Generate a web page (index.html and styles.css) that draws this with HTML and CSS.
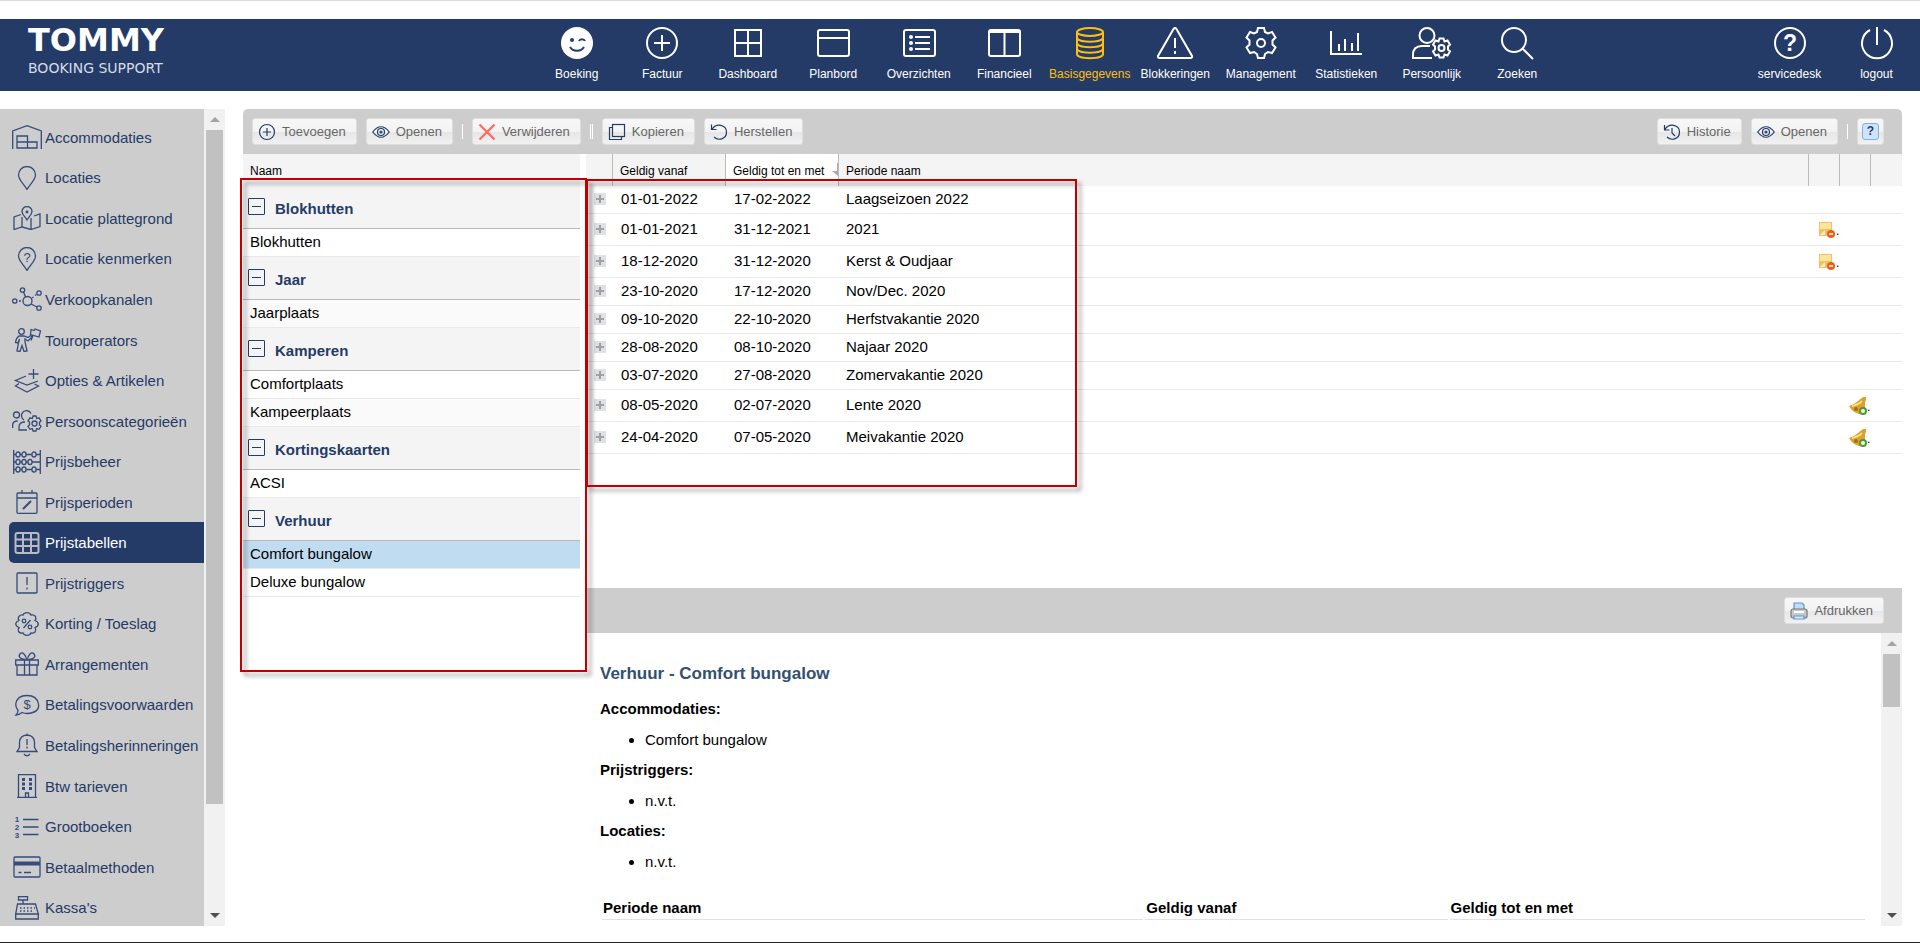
FILE: index.html
```html
<!DOCTYPE html>
<html lang="nl">
<head>
    <meta charset="UTF-8">
    <meta name="viewport" content="width=device-width, initial-scale=1.0">
    <title>Tommy Booking Support - Prijstabellen</title>
    <link rel="stylesheet" href="styles.css">
</head>
<body>
    <header class="topbar">
        <a href="#" class="logo">
            <span class="logo-name">TOMMY</span>
            <span class="logo-sub">BOOKING SUPPORT</span>
        </a>
        <nav class="main-nav">
            <a href="#">
                <svg viewBox="0 0 32 32"><circle cx="16" cy="16" r="16" fill="#fff" stroke="none"/><circle cx="11" cy="13" r="2" fill="#253b67" stroke="none"/><path d="M18 14c1-2.500 5-2.500 6 0M9 20c3 5 11 5 14 0" stroke="#253b67"/></svg>
                <span>Boeking</span>
            </a>
            <a href="#">
                <svg viewBox="0 0 32 32"><circle cx="16" cy="16" r="15"/><path d="M16 8v16M8 16h16"/></svg>
                <span>Factuur</span>
            </a>
            <a href="#">
                <svg viewBox="0 0 32 32"><path d="M3 3h26v26H3zM16 3v26M3 16h26"/></svg>
                <span>Dashboard</span>
            </a>
            <a href="#">
                <svg viewBox="0 0 32 32"><rect x="1" y="3" width="31" height="26" rx="2"/><path d="M1 11h31"/></svg>
                <span>Planbord</span>
            </a>
            <a href="#">
                <svg viewBox="0 0 32 32"><rect x="1" y="3" width="31" height="26" rx="2"/><path d="M12 10h15M12 16h15M12 22h15"/><g fill="#fff" stroke="none"><circle cx="8" cy="10" r="2"/><circle cx="8" cy="16" r="2"/><circle cx="8" cy="22" r="2"/></g></svg>
                <span>Overzichten</span>
            </a>
            <a href="#">
                <svg viewBox="0 0 32 32"><rect x="1" y="3" width="31" height="26" rx="2"/><path d="M1 5h31M16.500 5v24" /></svg>
                <span>Financieel</span>
            </a>
            <a href="#" class="active">
                <svg viewBox="0 0 32 32"><ellipse cx="16" cy="5" rx="13" ry="4"/><path d="M3 5v22c0 5.500 26 5.500 26 0V5M3 10.500c0 5.500 26 5.500 26 0M3 16c0 5.500 26 5.500 26 0M3 21.500c0 5.500 26 5.500 26 0"/></svg>
                <span>Basisgegevens</span>
            </a>
            <a href="#">
                <svg class="wide" viewBox="0 0 36 32"><path d="M16.500 2q1.500-2 3 0L35 29q.500 2-1.500 2h-31Q.500 31 1 29zM18 11v10M18 24v3"/></svg>
                <span>Blokkeringen</span>
            </a>
            <a href="#">
                <svg viewBox="0 0 32 32"><path d="M13 1h6l1 4 3 1.500 4-1.500 3.500 5.500-3 3v4l3 3L27 26l-4-1-3 2-1 4h-6l-1-4-3-2-4 1-3.500-5.500 3-3v-4l-3-3L5 5l4 1.500L12 5z"/><circle cx="16" cy="16" r="4"/></svg>
                <span>Management</span>
            </a>
            <a href="#">
                <svg viewBox="0 0 32 32"><path d="M1 4v23h31M9 24v-7M15 24V12M22 24v-8M28 24V6"/></svg>
                <span>Statistieken</span>
            </a>
            <a href="#">
                <svg class="wide" viewBox="0 0 40 32"><circle cx="15" cy="8.500" r="7.500"/><path d="M18 19H10Q1 19 1 28v3h19"/><path d="M27.500 11.500h4l1 3 3-1 2.500 4-2 2v3l2 2-2.500 4-3-1-1 3h-4l-1-3-3 1-2.500-4 2-2v-3l-2-2 2.500-4 3 1z"/><circle cx="29.500" cy="21" r="3"/></svg>
                <span>Persoonlijk</span>
            </a>
            <a href="#">
                <svg viewBox="0 0 32 32"><circle cx="13" cy="13" r="12"/><path d="M22 22l10 10"/></svg>
                <span>Zoeken</span>
            </a>
        </nav>
        <nav class="user-nav">
            <a href="#">
                <svg viewBox="0 0 32 32"><circle cx="16" cy="16" r="15"/><text x="16" y="24" class="nav-mark">?</text></svg>
                <span>servicedesk</span>
            </a>
            <a href="#">
                <svg viewBox="0 0 32 32"><path d="M16 0v18M9 3a15 15 0 1 0 14 0"/></svg>
                <span>logout</span>
            </a>
        </nav>
    </header>

    <div class="workspace">
        <aside class="sidebar">
            <nav class="menu">
                <a href="#"><svg viewBox="0 0 30 24"><path d="M.7 24V6L15 .7 29.300 6v18M5 11h10.500v6H5zM5 17h20v6H5zM15.500 17v6"/></svg>Accommodaties</a>
                <a href="#"><svg viewBox="0 0 30 24"><path d="M15 23.500C12 18 6.500 14 6.500 9a8.500 8.500 0 0 1 17 0c0 5-5.500 9-8.500 14.500z"/></svg>Locaties</a>
                <a href="#"><svg viewBox="0 0 30 24"><path d="M15 14c-2-3.500-5-5.500-5-8.500a5 5 0 0 1 10 0c0 3-3 5-5 8.500zM9 8.500L2 11v12.500L10 21l9 2.500 9-3V8l-6 2M10 11v10M19 12v11.500"/><circle cx="15" cy="6" r=".8"/></svg>Locatie plattegrond</a>
                <a href="#"><svg viewBox="0 0 30 24"><path d="M15 23.500C12 18 6.500 14 6.500 9a8.500 8.500 0 0 1 17 0c0 5-5.500 9-8.500 14.500z"/><text x="15" y="15">?</text></svg>Locatie kenmerken</a>
                <a href="#"><svg viewBox="0 0 30 24"><circle cx="15.500" cy="14" r="4.500"/><circle cx="2.700" cy="14" r="2.200"/><circle cx="10.500" cy="3" r="2.200"/><circle cx="27" cy="6" r="2.200"/><circle cx="27" cy="21" r="2.200"/><path d="M7 14h2M11.500 5l2 5M20 11l1.500-1M23 8.500l1.500-1M19 17l6 3"/></svg>Verkoopkanalen</a>
                <a href="#"><svg viewBox="0 0 30 24"><circle cx="9.500" cy="3.500" r="2.800"/><path d="M7 8Q4 10 3.500 14.500l2.500.5 1.500-4L6.500 15 5 23l3 .5 2-6 2 6 3-.5-2-9v-3l3 2 4-4-1.500-1.500-2.500 2L12 8zM19 1.500l3 1 1-1.500 5.500 2-1.500 6-8.500-2.500zM21 7.500l-2 5"/></svg>Touroperators</a>
                <a href="#"><svg viewBox="0 0 30 24"><path d="M21.500 0v10M16.500 5h10M14 7L3.500 11.500 15 16l11-4M7 14.500L3.500 17 15 23l11.500-6-4-2"/></svg>Opties &amp; Artikelen</a>
                <a href="#"><svg viewBox="0 0 30 24"><circle cx="4.500" cy="6" r="3"/><path d="M.7 19v-3q0-4 5-4M19 4.500A5 5 0 1 0 12 11M15 21H7v-3q0-5 6-5"/><path d="M21 7h3l.7 2.500 2.300-.7 2 3-1.500 1.500v2.500l1.500 1.500-2 3-2.300-.7L24 22h-3l-.7-2.400-2.300.7-2-3 1.500-1.500v-2.500L16 11.800l2-3 2.300.7z"/><circle cx="22.500" cy="14.500" r="2.500"/></svg>Persoonscategorieën</a>
                <a href="#"><svg viewBox="0 0 30 24"><path d="M1.700 0v24M28.300 0v24M2 4.500h26M2 12h26M2 19.500h26"/><g class="bead"><rect x="4" y="2" width="4" height="5" rx="2"/><rect x="10" y="2" width="4" height="5" rx="2"/><rect x="20" y="2" width="4" height="5" rx="2"/><rect x="4" y="9.500" width="4" height="5" rx="2"/><rect x="10" y="9.500" width="4" height="5" rx="2"/><rect x="16" y="9.500" width="4" height="5" rx="2"/><rect x="4" y="17" width="4" height="5" rx="2"/><rect x="10" y="17" width="4" height="5" rx="2"/><rect x="20" y="17" width="4" height="5" rx="2"/></g></svg>Prijsbeheer</a>
                <a href="#"><svg viewBox="0 0 30 24"><rect x="5" y="3" width="20" height="20.300" rx="1"/><path d="M5 8h20M10 0v3M20 0v3"/><path d="M11 19l8-8" stroke-width="2"/></svg>Prijsperioden</a>
                <a href="#" class="active"><svg viewBox="0 0 30 24"><rect x="3.500" y="2" width="23" height="20" rx="2"/><path d="M3.500 8.500h23M3.500 15h23M11 2v20M19 2v20" /></svg>Prijstabellen</a>
                <a href="#"><svg viewBox="0 0 30 24"><rect x="5" y="2" width="20" height="20" rx="1"/><path d="M15 6v8M15 16.500v2"/></svg>Prijstriggers</a>
                <a href="#"><svg viewBox="0 0 30 24"><path d="M15 .7q3 0 4 2.300 3-.5 4.500 1.500 1 2-.5 4 3 1 3.300 3.500 0 2.500-3.300 3.500 1.500 2.500 0 4.500-1.500 1.500-4 1-1 2.300-4 2.300t-4-2.300q-3 .5-4.500-1.500-1-2 .5-4-3-1-3.300-3.500Q4 9.500 7 8.500q-1.500-2.500 0-4Q8.500 2.500 11 3q1-2.300 4-2.300zM18.500 8l-7 8"/><circle cx="12" cy="9" r="1.800"/><circle cx="18" cy="15" r="1.800"/></svg>Korting / Toeslag</a>
                <a href="#"><svg viewBox="0 0 30 24"><path d="M3.700 8h22.600v5H3.700zM5 13v10h20V13M12.500 8v15M17.500 8v15M13 7.500C9 7 5.500 5 8 2s6 1 6.500 5.500M17 7.500c4-.5 7.500-2.500 5-5.500s-6 1-6.500 5.500"/></svg>Arrangementen</a>
                <a href="#"><svg viewBox="0 0 30 24"><path d="M6 17.500Q3.500 14 3.700 11 5 2.500 15 2.500T26.500 11 15 20.500q-3 0-5-1-3 2.500-6 2.500 2-2 2-4.500z"/><text x="15" y="16">$</text></svg>Betalingsvoorwaarden</a>
                <a href="#"><svg viewBox="0 0 30 24"><path d="M15 .5v1.500M5 18.500h20l-2.500-4V9q-.5-6.500-7.500-7-7 .5-7.500 7v5.500zM12 21q3 3.500 6 0M15 6v6M15 13.500v2"/></svg>Betalingsherinneringen</a>
                <a href="#"><svg viewBox="0 0 30 24"><path d="M6.500 23.300V.7h17v22.600M5 23.300h20M13.500 23v-4h3v4"/><path d="M10 5.500h3M17 5.500h3M10 10h3M17 10h3M10 14.500h3M17 14.500h3" stroke-width="3"/></svg>Btw tarieven</a>
                <a href="#"><svg viewBox="0 0 30 24"><path d="M11 4.500h15.500M11 12h15.500M11 19.500h15.500"/><g class="digits"><text x="5" y="7">1</text><text x="5" y="15">2</text><text x="5" y="23">3</text></g></svg>Grootboeken</a>
                <a href="#"><svg viewBox="0 0 30 24"><rect x="2" y="2" width="26" height="20" rx="1"/><path d="M2 8.500h26" stroke-width="4"/><path d="M6.500 17.500h3M12 17.500h7"/></svg>Betaalmethoden</a>
                <a href="#"><svg viewBox="0 0 30 24"><path d="M6.500.7h9V4h-9zM11 4v4M5.500 8h18l2.800 10H3.700zM3.700 18h22.600v5H3.700z"/><path d="M8 12h15M8 15h14" stroke-dasharray="1.500 2"/></svg>Kassa's</a>
            </nav>
            <div class="scrollbar" aria-hidden="true">
                <span class="arrow up"></span>
                <div class="track"><div class="thumb"></div></div>
                <span class="arrow down"></span>
            </div>
        </aside>

        <main class="content">
            <div class="toolbar">
                <button class="btn"><svg viewBox="0 0 18 18"><circle cx="9" cy="9" r="7.500"/><path d="M9 5v8M5 9h8"/></svg>Toevoegen</button>
                <button class="btn"><svg viewBox="0 0 18 18"><path d="M.7 9Q9-1.500 17.300 9 9 19.500.7 9z"/><circle cx="9" cy="9" r="3.500"/><circle cx="9" cy="9" r="1"/></svg>Openen</button>
                <span class="sep"></span>
                <button class="btn"><svg viewBox="0 0 18 18"><path d="M1.500 1.500l15 15M16.500 1.500l-15 15" stroke="#ff6a5c" stroke-width="2.200"/></svg>Verwijderen</button>
                <span class="sep double"></span>
                <button class="btn"><svg viewBox="0 0 18 18"><rect x="4.500" y="1.500" width="12" height="12"/><path d="M4.500 4.500h-3v12h12v-3"/></svg>Kopieren</button>
                <button class="btn"><svg viewBox="0 0 18 18"><path d="M1.500 1.500v5h5M2 6.500C6-.5 16.500 1.500 16.500 9S8 18 4 14"/></svg>Herstellen</button>
                <span class="spacer"></span>
                <button class="btn"><svg viewBox="0 0 18 18"><path d="M1.500 2v5h5M2 6.500C6-.5 16.500 1.500 16.500 9S8 18 4 14M9 5v5l3 3"/></svg>Historie</button>
                <button class="btn"><svg viewBox="0 0 18 18"><path d="M.7 9Q9-1.500 17.300 9 9 19.500.7 9z"/><circle cx="9" cy="9" r="3.500"/><circle cx="9" cy="9" r="1"/></svg>Openen</button>
                <span class="sep"></span>
                <button class="btn help" aria-label="Help"><span>?</span></button>
            </div>

            <div class="panels">
                <section class="tree">
                    <div class="tree-head">Naam</div>
                    <div class="group"><button class="toggle" aria-label="Inklappen"></button>Blokhutten</div>
                    <a href="#" class="item">Blokhutten</a>
                    <div class="group"><button class="toggle" aria-label="Inklappen"></button>Jaar</div>
                    <a href="#" class="item alt">Jaarplaats</a>
                    <div class="group"><button class="toggle" aria-label="Inklappen"></button>Kamperen</div>
                    <a href="#" class="item">Comfortplaats</a>
                    <a href="#" class="item alt">Kampeerplaats</a>
                    <div class="group"><button class="toggle" aria-label="Inklappen"></button>Kortingskaarten</div>
                    <a href="#" class="item">ACSI</a>
                    <div class="group"><button class="toggle" aria-label="Inklappen"></button>Verhuur</div>
                    <a href="#" class="item selected">Comfort bungalow</a>
                    <a href="#" class="item">Deluxe bungalow</a>
                </section>

                <div class="right">
                    <section class="periods">
                        <table class="grid">
                            <colgroup>
                                <col class="c-plus"><col class="c-date"><col class="c-date"><col><col class="c-icon"><col class="c-icon"><col class="c-icon">
                            </colgroup>
                            <thead>
                                <tr><th></th><th>Geldig vanaf</th><th class="sorted"><span>Geldig tot en met<svg viewBox="0 0 6 14"><path d="M5.500 0v10"/><path d="M0 8h6v5z" fill="#aaa" stroke="none"/></svg></span></th><th>Periode naam</th><th></th><th></th><th></th></tr>
                            </thead>
                            <tbody>
                                <tr><td><button class="plus" aria-label="Uitklappen"></button></td><td>01-01-2022</td><td>17-02-2022</td><td>Laagseizoen 2022</td><td></td><td></td><td></td></tr>
                                <tr class="tall"><td><button class="plus" aria-label="Uitklappen"></button></td><td>01-01-2021</td><td>31-12-2021</td><td>2021</td><td><span class="flag"><svg viewBox="0 0 18 18"><rect x="1" y="1" width="13" height="14" fill="#f5bf62"/><rect x="2" y="2" width="11" height="6" fill="#fbe3a0"/><path d="M2 14l5-5v5z" fill="#fff0c0"/><circle cx="13" cy="13" r="4" fill="#e2611c"/><path d="M11 13h4" stroke="#fff" stroke-width="1.500"/></svg>.</span></td><td></td><td></td></tr>
                                <tr class="tall"><td><button class="plus" aria-label="Uitklappen"></button></td><td>18-12-2020</td><td>31-12-2020</td><td>Kerst &amp; Oudjaar</td><td><span class="flag"><svg viewBox="0 0 18 18"><rect x="1" y="1" width="13" height="14" fill="#f5bf62"/><rect x="2" y="2" width="11" height="6" fill="#fbe3a0"/><path d="M2 14l5-5v5z" fill="#fff0c0"/><circle cx="13" cy="13" r="4" fill="#e2611c"/><path d="M11 13h4" stroke="#fff" stroke-width="1.500"/></svg>.</span></td><td></td><td></td></tr>
                                <tr><td><button class="plus" aria-label="Uitklappen"></button></td><td>23-10-2020</td><td>17-12-2020</td><td>Nov/Dec. 2020</td><td></td><td></td><td></td></tr>
                                <tr><td><button class="plus" aria-label="Uitklappen"></button></td><td>09-10-2020</td><td>22-10-2020</td><td>Herfstvakantie 2020</td><td></td><td></td><td></td></tr>
                                <tr><td><button class="plus" aria-label="Uitklappen"></button></td><td>28-08-2020</td><td>08-10-2020</td><td>Najaar 2020</td><td></td><td></td><td></td></tr>
                                <tr><td><button class="plus" aria-label="Uitklappen"></button></td><td>03-07-2020</td><td>27-08-2020</td><td>Zomervakantie 2020</td><td></td><td></td><td></td></tr>
                                <tr class="tall"><td><button class="plus" aria-label="Uitklappen"></button></td><td>08-05-2020</td><td>02-07-2020</td><td>Lente 2020</td><td></td><td><span class="flag"><svg viewBox="0 0 18 18"><path d="M0 9q5-1 9-5l5-4h3v3l-1 2v12H10Q3 15 0 9z" fill="#dca22a"/><path d="M3 9q6-1 10-5" stroke="#f8dc7a" stroke-width="2" fill="none"/><circle cx="7" cy="12" r="2" fill="#a86d12"/><circle cx="14" cy="14" r="3" fill="#fff" stroke="#4b9a35" stroke-width="2"/></svg>.</span></td><td></td></tr>
                                <tr class="tall"><td><button class="plus" aria-label="Uitklappen"></button></td><td>24-04-2020</td><td>07-05-2020</td><td>Meivakantie 2020</td><td></td><td><span class="flag"><svg viewBox="0 0 18 18"><path d="M0 9q5-1 9-5l5-4h3v3l-1 2v12H10Q3 15 0 9z" fill="#dca22a"/><path d="M3 9q6-1 10-5" stroke="#f8dc7a" stroke-width="2" fill="none"/><circle cx="7" cy="12" r="2" fill="#a86d12"/><circle cx="14" cy="14" r="3" fill="#fff" stroke="#4b9a35" stroke-width="2"/></svg>.</span></td><td></td></tr>
                            </tbody>
                        </table>
                    </section>

                    <section class="detail">
                        <div class="toolbar square">
                            <span class="spacer"></span>
                            <button class="btn"><svg viewBox="0 0 18 18"><path d="M4 8V1h8l2 2v5z" fill="#bcdcf8" stroke="#5b96d6"/><rect x="1" y="7" width="16" height="9" rx="2" fill="#c9c9c9" stroke="#777"/><path d="M4 10h10" stroke="#fff" stroke-width="2"/><path d="M4 14h10v3H4z" fill="#d8ecff" stroke="#5b96d6"/></svg>Afdrukken</button>
                        </div>
                        <div class="detail-body">
                            <div class="detail-text">
                                <h1>Verhuur - Comfort bungalow</h1>
                                <h2>Accommodaties:</h2>
                                <ul><li>Comfort bungalow</li></ul>
                                <h2>Prijstriggers:</h2>
                                <ul><li>n.v.t.</li></ul>
                                <h2>Locaties:</h2>
                                <ul><li>n.v.t.</li></ul>
                                <table class="summary">
                                    <tr><th>Periode naam</th><th>Geldig vanaf</th><th>Geldig tot en met</th></tr>
                                </table>
                            </div>
                            <div class="scrollbar" aria-hidden="true">
                                <span class="arrow up"></span>
                                <div class="track"><div class="thumb short"></div></div>
                                <span class="arrow down"></span>
                            </div>
                        </div>
                    </section>
                </div>

                <!-- highlight frames over both lists -->
                <div class="frame frame-tree"></div>
                <div class="frame frame-periods"></div>
            </div>
        </main>
    </div>
</body>
</html>
```
FILE: styles.css
```css
* {
    box-sizing: border-box;
}
body {
    font-family: Arial, "Liberation Sans", sans-serif;
    font-size: 15px;
    color: #000;
    margin: 0;
    height: 100vh;
    display: flex;
    flex-direction: column;
    background-color: #fff;
    border-top: 1px solid #dadade;
    border-bottom: 1px solid #222;
    overflow: hidden;
}
a {
    color: inherit;
    text-decoration: none;
}
button {
    font-family: inherit;
    cursor: pointer;
}
svg {
    fill: none;
    stroke: currentColor;
    flex: none;
}

/* top bar */
.topbar {
    display: flex;
    height: 72px;
    flex: none;
    margin-top: 18px;
    background-color: #253b67;
    color: #fff;
}
.logo {
    flex: 0 1 534px;
    padding: 2px 0 0 28px;
    display: flex;
    flex-direction: column;
    font-family: "DejaVu Sans", sans-serif;
}
.logo-name {
    font-size: 32px;
    line-height: 38px;
    font-weight: bold;
}
.logo-sub {
    font-size: 14px;
    line-height: 18px;
    color: #d5dbe8;
}
.main-nav {
    flex: 0 1 1026px;
    display: grid;
    grid-template-columns: repeat(12, 1fr);
}
.user-nav {
    margin-left: auto;
    display: grid;
    grid-template-columns: repeat(2, 87px);
}
.main-nav a,
.user-nav a {
    display: flex;
    flex-direction: column;
    align-items: center;
    padding-top: 8px;
    gap: 8px;
    min-width: 0;
    font-size: 12px;
    line-height: 14px;
}
.topbar svg {
    width: 32px;
    height: 32px;
    stroke-width: 2;
    overflow: visible;
}
.topbar svg.wide {
    width: 40px;
}
.nav-mark {
    font-size: 23px;
    font-weight: bold;
    text-anchor: middle;
    fill: #fff;
    stroke: none;
}
.main-nav .active {
    color: #fdbf0f;
}

/* workspace */
.workspace {
    flex: 1;
    min-height: 0;
    display: flex;
    gap: 18px;
    margin: 18px 18px 16px 0;
}
.sidebar {
    width: 225px;
    flex: none;
    display: flex;
    background-color: #cdcdcd;
    overflow: hidden;
}
.menu {
    flex: 1;
    display: flex;
    flex-direction: column;
    padding: 8px 0 0 9px;
    margin-bottom: -2px;
    color: #253b67;
}
.menu a {
    flex: 1;
    display: flex;
    align-items: center;
    gap: 3px;
    padding-left: 3px;
    border-radius: 5px 0 0 5px;
    white-space: nowrap;
}
.menu svg {
    width: 30px;
    height: 24px;
    color: #364b7a;
    stroke-width: 1.3;
}
.menu text {
    font-size: 13px;
    text-anchor: middle;
    fill: currentColor;
    stroke: none;
}
.menu .digits text {
    font-size: 8px;
    font-weight: bold;
}
.menu .bead {
    fill: #cdcdcd;
}
.menu .active {
    background-color: #253b67;
    color: #fff;
}
.menu .active svg {
    color: #b9bac4;
    stroke-width: 2;
}

/* scrollbars */
.scrollbar {
    width: 21px;
    flex: none;
    display: flex;
    flex-direction: column;
    background-color: #f1f1f1;
}
.arrow {
    height: 21px;
    display: flex;
    align-items: center;
    justify-content: center;
}
.arrow::before {
    content: "";
    border: 5px solid transparent;
}
.arrow.up::before {
    border-top: none;
    border-bottom-color: #a3a3a3;
}
.arrow.down::before {
    border-bottom: none;
    border-top-color: #505050;
}
.track {
    flex: 1;
    padding: 0 2px;
}
.thumb {
    height: 87%;
    background-color: #c1c1c1;
}
.thumb.short {
    height: 21%;
}

/* toolbar */
.content {
    flex: 1;
    min-width: 0;
    display: flex;
    flex-direction: column;
}
.toolbar {
    height: 45px;
    flex: none;
    display: flex;
    align-items: center;
    gap: 9px;
    padding: 0 18px 0 9px;
    background-color: #cdcdcd;
    border-radius: 5px 5px 0 0;
}
.toolbar.square {
    border-radius: 0;
}
.spacer {
    flex: 1;
}
.btn {
    height: 27px;
    display: flex;
    align-items: center;
    gap: 6px;
    padding: 0 10px 0 5px;
    border: 1px solid #dedede;
    border-radius: 3px;
    background: linear-gradient(#f7f7f7, #f3f3f3 50%, #e6e6e6 51%, #f1f1f1);
    color: #666;
    font-size: 13px;
}
.btn svg {
    width: 18px;
    height: 18px;
    color: #253b67;
    stroke-width: 1.2;
}
.help {
    padding: 0 4px;
}
.help span {
    width: 17px;
    height: 17px;
    border: 1px solid #7fb0e8;
    border-radius: 3px;
    background-color: #cfe3fa;
    color: #1e3c8c;
    font-size: 12px;
    line-height: 15px;
    font-weight: bold;
}
.sep {
    width: 1px;
    height: 15px;
    background-color: #fff;
}
.sep.double {
    width: 3px;
    background-color: transparent;
    border: solid #fff;
    border-width: 0 1px;
}

/* panels */
.panels {
    flex: 1;
    min-height: 0;
    display: grid;
    grid-template-columns: 343px 1fr;
    position: relative;
}
.tree {
    padding-right: 6px;
}
.tree-head {
    height: 32px;
    padding: 9px 7px 0;
    background-color: #f4f4f4;
    font-size: 12px;
    line-height: 16px;
}
.group {
    height: 43px;
    display: flex;
    align-items: center;
    gap: 10px;
    padding: 2px 5px 0;
    background-color: #f4f4f4;
    border-bottom: 1px solid #b9b9b9;
    color: #253b67;
    font-weight: bold;
}
.toggle {
    width: 17px;
    height: 17px;
    padding: 0 3px;
    margin-bottom: 4px;
    border: 1px solid #253b67;
    border-radius: 1px;
    background: none;
}
.toggle::before {
    content: "";
    display: block;
    height: 1px;
    background-color: #253b67;
}
.item {
    display: block;
    height: 28px;
    padding-left: 7px;
    border-bottom: 1px solid #e9e9e9;
    line-height: 26px;
}
.item.alt {
    background-color: #fafafa;
}
.item.selected {
    background-color: #c0dcf1;
}
.right {
    min-width: 0;
    display: grid;
    grid-template-rows: 434fr 338fr;
}
.grid {
    width: 100%;
    border-collapse: separate;
    border-spacing: 0;
    table-layout: fixed;
}
.c-plus {
    width: 27px;
}
.c-date {
    width: 113px;
}
.c-icon {
    width: 31px;
}
.grid th {
    height: 32px;
    padding: 1px 0 0 7px;
    background-color: #f4f4f4;
    border-right: 1px solid #bbb;
    font-size: 12px;
    font-weight: normal;
    line-height: 16px;
    text-align: left;
    white-space: nowrap;
}
.grid th:nth-child(7) {
    border-right: none;
}
.grid th.sorted {
    background-color: #fff;
}
.sorted span {
    display: flex;
    justify-content: space-between;
}
.sorted svg {
    width: 6px;
    height: 14px;
    stroke: #aaa;
}
.grid td {
    height: 28px;
    padding: 0 7px 2px 8px;
    border-bottom: 1px solid #e9e9e9;
    line-height: 20px;
}
.grid td:nth-child(4) {
    padding-left: 7px;
}
.grid td:nth-child(n+5) {
    padding: 0;
}
.tall td {
    height: 32px;
}
.plus {
    display: block;
    width: 12px;
    height: 12px;
    padding: 0;
    border: none;
    background:
        linear-gradient(#a0a0a0, #a0a0a0) center / 8px 2px no-repeat,
        linear-gradient(#a0a0a0, #a0a0a0) center / 2px 8px no-repeat,
        #dfe1e5;
}
.flag {
    display: flex;
    align-items: flex-end;
    padding-left: 9px;
    line-height: 16px;
    font-size: 12px;
}
.flag svg {
    width: 18px;
    height: 18px;
    stroke: none;
}

/* detail pane */
.detail {
    min-height: 0;
    display: flex;
    flex-direction: column;
}
.detail-body {
    flex: 1;
    min-height: 0;
    display: flex;
}
.detail-text {
    flex: 1;
    padding: 31px 14px 0;
    overflow: hidden;
}
.detail-text h1 {
    margin: 0 0 15px;
    font-size: 17px;
    line-height: 20px;
    color: #34506e;
}
.detail-text h2 {
    margin: 0;
    font-size: 15px;
    line-height: 20px;
}
.detail-text ul {
    margin: 0;
    padding: 11px 0 10px 45px;
    line-height: 20px;
}
.summary {
    width: 100%;
    margin-top: 13px;
    border-spacing: 2px;
}
.summary th {
    padding: 1px;
    border-bottom: 1px solid #e2e2e2;
    line-height: 20px;
    text-align: left;
}
.summary th:first-child {
    width: 43%;
}
.summary th:nth-child(2) {
    width: 24%;
}

/* red highlight frames */
.frame {
    position: absolute;
    border: 2px solid #c00000;
    filter: drop-shadow(4px 4px 2px rgba(0, 0, 0, 0.4));
    pointer-events: none;
}
.frame-tree {
    left: -3px;
    top: 24px;
    width: 347px;
    height: 494px;
}
.frame-periods {
    left: 343px;
    top: 25px;
    width: 491px;
    height: 308px;
}
```
